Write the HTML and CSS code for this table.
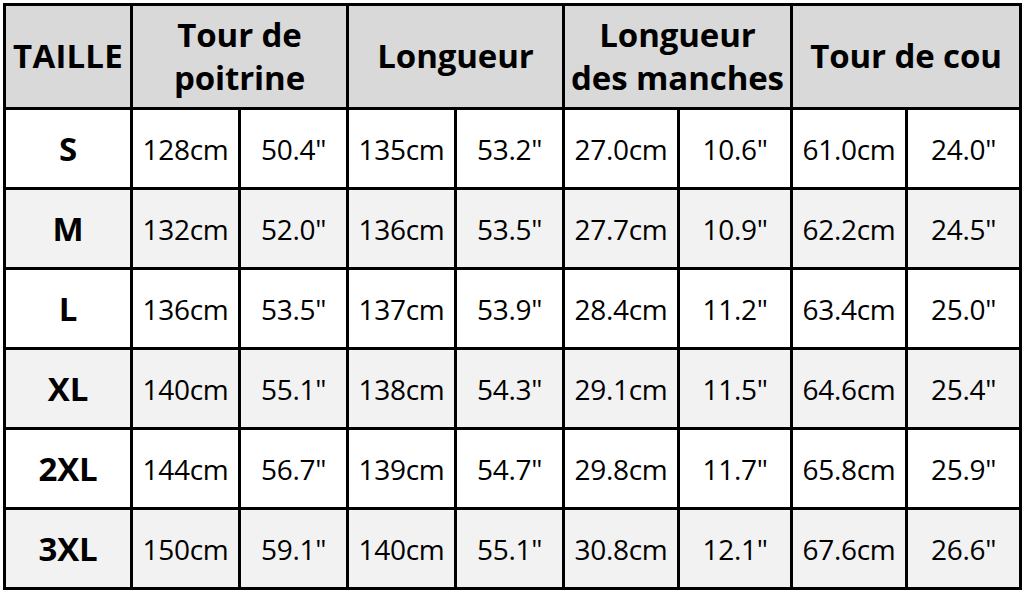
FILE: index.html
```html
<!DOCTYPE html>
<html lang="fr">
<head>
<meta charset="utf-8">
<title>Tableau des tailles</title>
<link rel="stylesheet" href="styles.css">
</head>
<body>
<table class="sizes">
  <colgroup>
    <col class="c-size">
    <col class="c-a"><col class="c-a">
    <col class="c-a"><col class="c-a">
    <col class="c-b"><col class="c-c">
    <col class="c-b"><col class="c-d">
  </colgroup>
  <thead>
    <tr class="head">
      <th class="label">TAILLE</th>
      <th colspan="2">Tour de<br>poitrine</th>
      <th colspan="2">Longueur</th>
      <th colspan="2">Longueur<br>des manches</th>
      <th colspan="2">Tour de cou</th>
    </tr>
  </thead>
  <tbody>
    <tr><th>S</th><td>128cm</td><td>50.4"</td><td>135cm</td><td>53.2"</td><td>27.0cm</td><td>10.6"</td><td>61.0cm</td><td>24.0"</td></tr>
    <tr class="alt"><th>M</th><td>132cm</td><td>52.0"</td><td>136cm</td><td>53.5"</td><td>27.7cm</td><td>10.9"</td><td>62.2cm</td><td>24.5"</td></tr>
    <tr><th>L</th><td>136cm</td><td>53.5"</td><td>137cm</td><td>53.9"</td><td>28.4cm</td><td>11.2"</td><td>63.4cm</td><td>25.0"</td></tr>
    <tr class="alt"><th>XL</th><td>140cm</td><td>55.1"</td><td>138cm</td><td>54.3"</td><td>29.1cm</td><td>11.5"</td><td>64.6cm</td><td>25.4"</td></tr>
    <tr><th>2XL</th><td>144cm</td><td>56.7"</td><td>139cm</td><td>54.7"</td><td>29.8cm</td><td>11.7"</td><td>65.8cm</td><td>25.9"</td></tr>
    <tr class="alt"><th>3XL</th><td>150cm</td><td>59.1"</td><td>140cm</td><td>55.1"</td><td>30.8cm</td><td>12.1"</td><td>67.6cm</td><td>26.6"</td></tr>
  </tbody>
</table>
</body>
</html>
```
FILE: styles.css
```css
html, body {
  margin: 0;
  padding: 0;
  background: #ffffff;
}
body {
  padding: 3px 0 0 3px;
  font-family: "Open Sans", "Noto Sans", sans-serif;
  color: #000;
}
.sizes {
  border-collapse: collapse;
  table-layout: fixed;
  width: 1019px;
  border: 3px solid #000;
}
.c-size { width: 127px; }
.c-a { width: 108px; }
.c-b { width: 115px; }
.c-c { width: 113px; }
.c-d { width: 114px; }
.sizes th,
.sizes td {
  border: 3px solid #000;
  padding: 0;
  text-align: center;
  vertical-align: middle;
}
.sizes td {
  font-size: 28px;
  font-weight: 400;
  letter-spacing: -0.3px;
}
.sizes th {
  font-size: 33px;
  font-weight: 700;
  letter-spacing: -0.1px;
}
.head {
  height: 104px;
  background: #d9d9d9;
}
.head th {
  line-height: 43px;
  padding-bottom: 2px;
}
.head .label {
  font-size: 33px;
  letter-spacing: 0.2px;
}
tbody tr {
  height: 80px;
  background: #ffffff;
}
tbody tr.alt {
  background: #f2f2f2;
}
```
